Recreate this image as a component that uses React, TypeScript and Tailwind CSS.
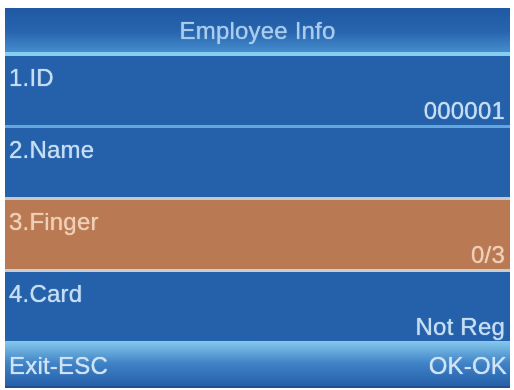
const rows = [
  { label: "1.ID", value: "000001", active: false },
  { label: "2.Name", value: "", active: false },
  { label: "3.Finger", value: "0/3", active: true },
  { label: "4.Card", value: "Not Reg", active: false },
];

function Row({ label, value, active }: { label: string; value: string; active: boolean }) {
  return (
    <div
      className={`h-[69px] flex flex-col pt-[8px] pl-[4px] pr-[5px] leading-[28px] ${
        active ? "bg-[#b97a53] text-[#efcfb8]" : "bg-[#2461aa] text-[#c6def5]"
      }`}
    >
      <span>{label}</span>
      <span className="self-end mt-[5px] min-h-[28px]">{value}</span>
    </div>
  );
}

export default function App() {
  return (
    <div className="w-[514px] h-[390px] bg-white pt-[8px] px-[5px] font-['Liberation_Sans',Arial,sans-serif] text-[24px] tracking-[0.2px]">
      <div className="w-[505px] h-[380px] flex flex-col bg-[#2461aa] blur-[0.5px] [text-shadow:0_0_1px_currentColor]">
        <div className="h-[48px] flex flex-col bg-gradient-to-b from-[#1f58a3] via-[#2865ae] to-[#4b95d2]">
          <div className="flex-1 flex items-center justify-center text-[#aacdee] pt-[2px]">
            Employee Info
          </div>
          <div className="h-[4px] bg-[#86cdef]" />
        </div>
        <Row {...rows[0]} />
        <div className="h-[3px] bg-[#63a8dc]" />
        <Row {...rows[1]} />
        <div className="h-[3px] bg-[#c3c9cf]" />
        <Row {...rows[2]} />
        <div className="h-[3px] bg-[#c9ccd0]" />
        <Row {...rows[3]} />
        <div className="flex-1 flex items-center justify-between pl-[4px] pr-[3px] pt-[4px] text-[#cfe4f7] bg-gradient-to-b from-[#86c9ec] via-[#3f82c6] to-[#2660aa] border-b-[2px] border-[#1f4f90]">
          <span>Exit-ESC</span>
          <span>OK-OK</span>
        </div>
      </div>
    </div>
  );
}
